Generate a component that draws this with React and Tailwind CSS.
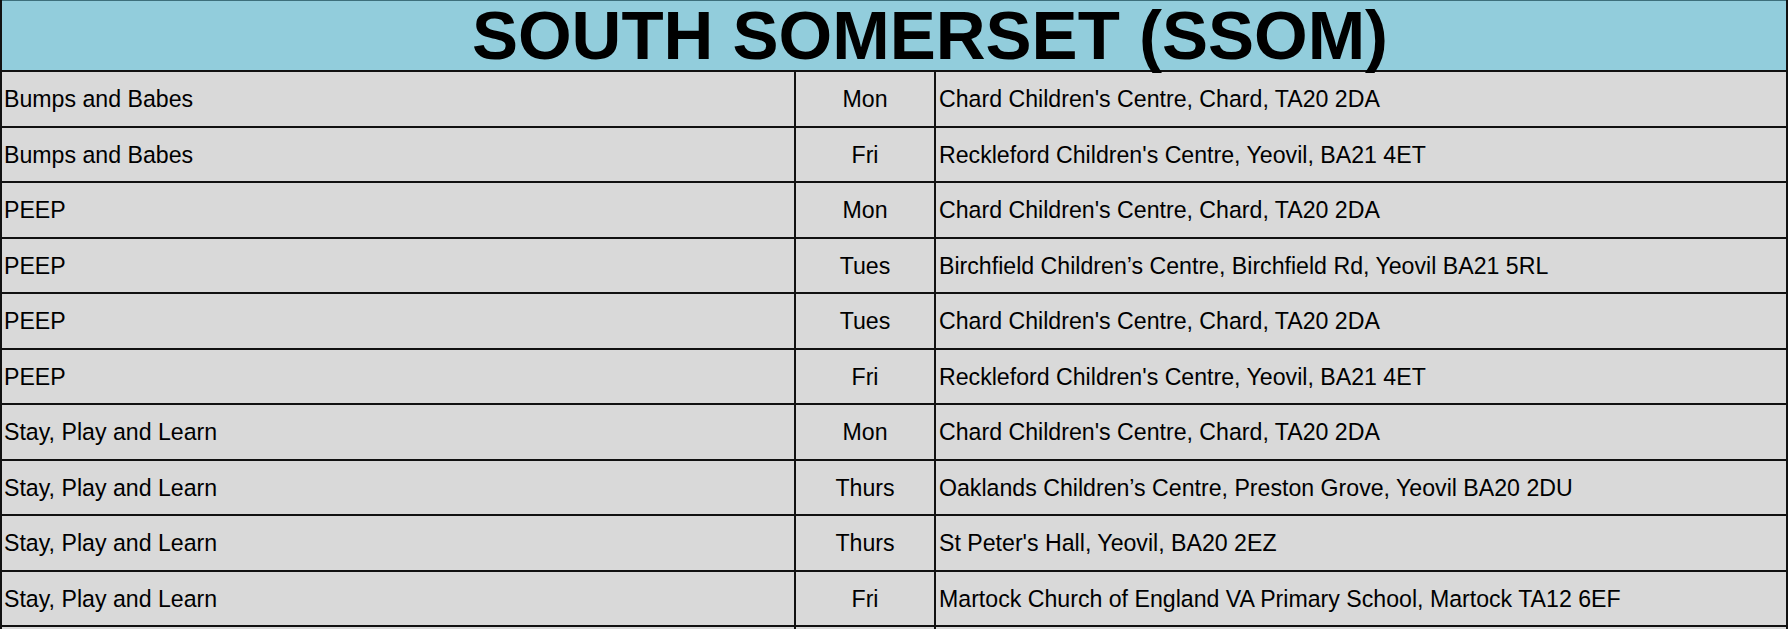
import React from "react";

const rows = [
  ["Bumps and Babes", "Mon", "Chard Children's Centre, Chard, TA20 2DA"],
  ["Bumps and Babes", "Fri", "Reckleford Children's Centre, Yeovil, BA21 4ET"],
  ["PEEP", "Mon", "Chard Children's Centre, Chard, TA20 2DA"],
  ["PEEP", "Tues", "Birchfield Children\u2019s Centre, Birchfield Rd, Yeovil BA21 5RL"],
  ["PEEP", "Tues", "Chard Children's Centre, Chard, TA20 2DA"],
  ["PEEP", "Fri", "Reckleford Children's Centre, Yeovil, BA21 4ET"],
  ["Stay, Play and Learn", "Mon", "Chard Children's Centre, Chard, TA20 2DA"],
  ["Stay, Play and Learn", "Thurs", "Oaklands Children\u2019s Centre, Preston Grove, Yeovil BA20 2DU"],
  ["Stay, Play and Learn", "Thurs", "St Peter's Hall, Yeovil, BA20 2EZ"],
  ["Stay, Play and Learn", "Fri", "Martock Church of England VA Primary School, Martock TA12 6EF"],
  ["", "", ""],
];

export default function App() {
  return (
    <div className="w-[1789px] h-[629px] overflow-hidden bg-white">
      <div
        className="w-[1788px] border-l-2 border-r-2 border-[#111] text-black"
        style={{ fontFamily: '"Liberation Sans", Arial, sans-serif' }}
      >
        <div className="h-[72px] bg-[#92cddc] border-t border-[#3d6f7b] border-b-2 border-b-[#111] flex items-start justify-center pl-[72px]">
          <h1 className="text-[69px] font-bold leading-none">
            SOUTH SOMERSET (SSOM)
          </h1>
        </div>
        {rows.map((r, i) => (
          <div
            key={i}
            className="grid grid-cols-[794px_140px_1fr] h-[55.5px] bg-[#d9d9d9] border-b-2 border-[#111] text-[23.15px] leading-none"
          >
            <div className="border-r-2 border-[#111] flex items-center pl-[2px] pt-[2px]">{r[0]}</div>
            <div className="border-r-2 border-[#111] flex items-center justify-center pt-[2px]">{r[1]}</div>
            <div className="flex items-center pl-[3px] pt-[2px]">{r[2]}</div>
          </div>
        ))}
      </div>
    </div>
  );
}
